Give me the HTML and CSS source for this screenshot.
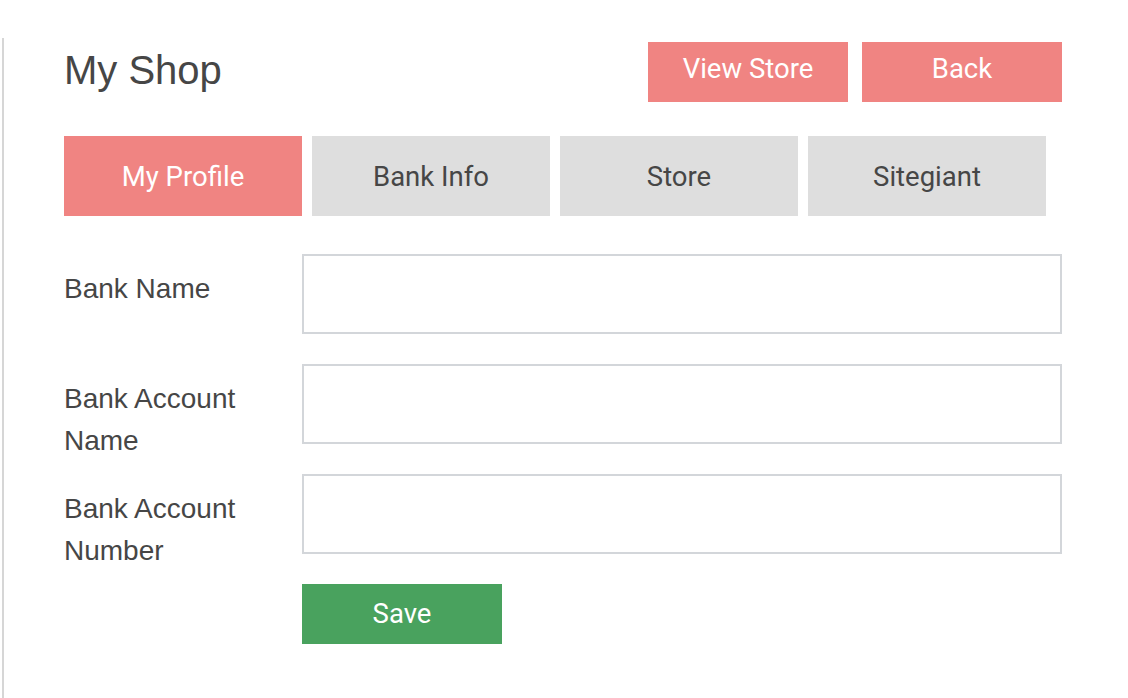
FILE: index.html
```html
<!DOCTYPE html>
<html>
<head>
<meta charset="utf-8">
<link rel="stylesheet" href="styles.css">
</head>
<body>
<div class="page">
  <div class="header">
    <h1 class="title">My Shop</h1>
    <div class="actions">
      <button class="btn btn-pink">View Store</button>
      <button class="btn btn-pink">Back</button>
    </div>
  </div>
  <div class="tabs">
    <div class="tab active">My Profile</div>
    <div class="tab">Bank Info</div>
    <div class="tab">Store</div>
    <div class="tab">Sitegiant</div>
  </div>
  <form class="form">
    <div class="row">
      <label class="label">Bank Name</label>
      <input class="input" type="text">
    </div>
    <div class="row">
      <label class="label">Bank Account<br>Name</label>
      <input class="input" type="text">
    </div>
    <div class="row">
      <label class="label">Bank Account<br>Number</label>
      <input class="input" type="text">
    </div>
    <div class="row submit">
      <div class="label"></div>
      <button type="button" class="btn btn-green">Save</button>
    </div>
  </form>
</div>
</body>
</html>
```
FILE: styles.css
```css
html, body {
  margin: 0;
  padding: 0;
  background: #ffffff;
}
.page {
  margin: 38px 0 0 2px;
  border-left: 2px solid #d6d6d6;
  padding: 4px 0 0 60px;
  width: 998px;
  min-height: 660px;
  box-sizing: content-box;
  font-family: "Liberation Sans", Arial, sans-serif;
  color: #464646;
}
.header {
  display: flex;
  justify-content: space-between;
  align-items: center;
  height: 60px;
}
.title {
  margin: 0;
  padding-bottom: 4px;
  font-weight: normal;
  font-size: 40px;
  line-height: 56px;
  color: #464646;
}
.actions {
  display: flex;
  gap: 14px;
}
.btn {
  border: none;
  width: 200px;
  height: 60px;
  font-family: Roboto, sans-serif;
  font-size: 27.5px;
  color: #ffffff;
  padding: 0 0 8px 0;
  cursor: pointer;
}
.btn-pink { background: #f08482; }
.btn-green { background: #49a25e; padding: 0 0 2px 0; }
.tabs {
  display: flex;
  gap: 10px;
  margin-top: 34px;
}
.tab {
  width: 238px;
  height: 80px;
  display: flex;
  align-items: center;
  justify-content: center;
  background: #dedede;
  font-family: Roboto, sans-serif;
  font-size: 27.5px;
  color: #464646;
}
.tab.active {
  background: #f08482;
  color: #ffffff;
}
.form {
  margin-top: 38px;
}
.row {
  display: flex;
  height: 80px;
  margin-bottom: 30px;
}
.row.submit { height: 60px; }
.label {
  width: 238px;
  flex: none;
  padding-top: 14px;
  font-size: 28px;
  line-height: 42px;
  color: #464646;
}
.row.submit .label { padding: 0; }
.input {
  width: 760px;
  height: 80px;
  box-sizing: border-box;
  border: 2px solid #d3d6da;
  margin: 0;
  padding: 0 12px;
  font-size: 24px;
  outline: none;
}
```
